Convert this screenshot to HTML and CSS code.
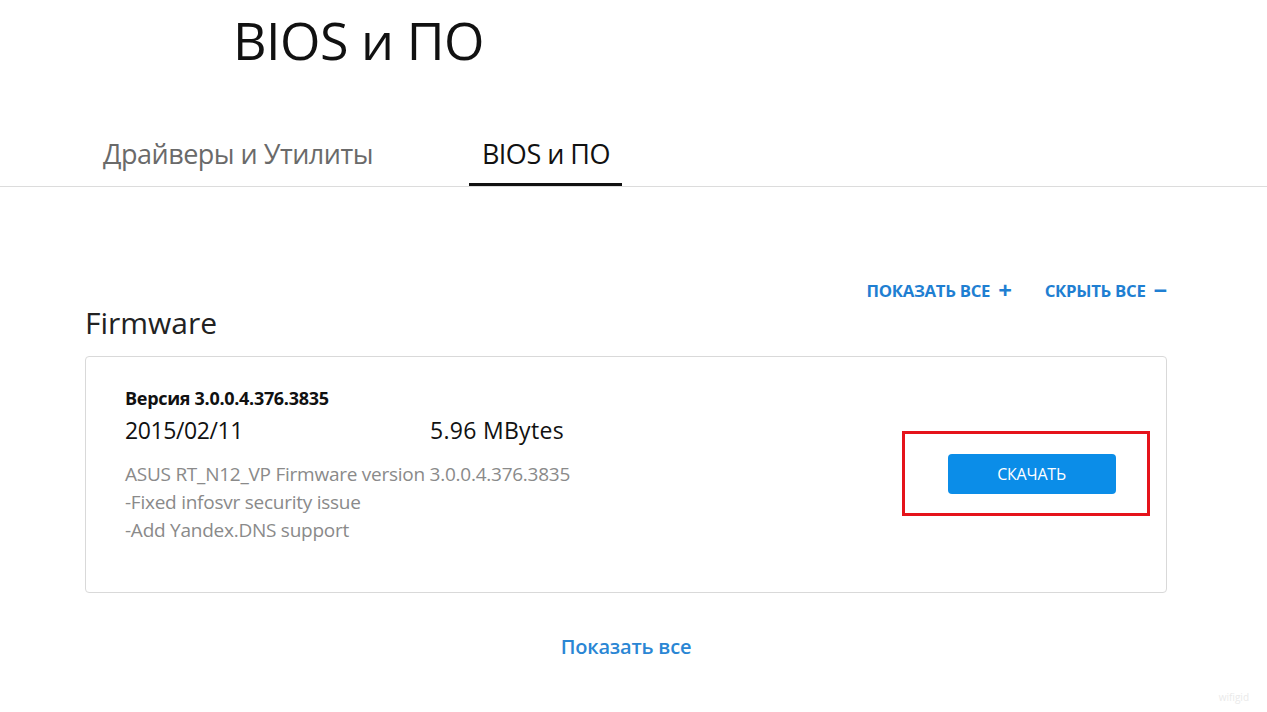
FILE: index.html
```html
<!DOCTYPE html>
<html lang="ru">
<head>
<meta charset="utf-8">
<link rel="stylesheet" href="styles.css">
</head>
<body>
<div class="page">
  <h1 class="title">BIOS и ПО</h1>
  <nav class="tabs">
    <div class="tab">Драйверы и Утилиты</div>
    <div class="tab active">BIOS и ПО</div>
  </nav>
  <section class="section">
    <div class="toggles">
      <a class="toggle">ПОКАЗАТЬ ВСЕ <span class="sign">+</span></a>
      <a class="toggle">СКРЫТЬ ВСЕ <span class="sign">−</span></a>
    </div>
    <h2 class="section-title">Firmware</h2>
    <div class="card">
      <div class="info">
        <div class="version">Версия 3.0.0.4.376.3835</div>
        <div class="meta">
          <span class="date">2015/02/11</span>
          <span class="size">5.96 MBytes</span>
        </div>
        <div class="desc">
          <div>ASUS RT_N12_VP Firmware version 3.0.0.4.376.3835</div>
          <div>-Fixed infosvr security issue</div>
          <div>-Add Yandex.DNS support</div>
        </div>
      </div>
      <div class="action">
        <div class="highlight">
          <button class="download">СКАЧАТЬ</button>
        </div>
      </div>
    </div>
    <div class="more"><a>Показать все</a></div>
  </section>
</div>
<div class="watermark">wifigid</div>
</body>
</html>
```
FILE: styles.css
```css
* { box-sizing: border-box; }
html, body { margin: 0; padding: 0; background: #fff; }
body {
  font-family: "Open Sans", "Noto Sans", sans-serif;
  color: #111;
  width: 1267px;
  height: 712px;
  overflow: hidden;
  position: relative;
}
.title {
  margin: 0;
  padding: 8px 0 0 233px;
  font-weight: 400;
  font-size: 52px;
  line-height: 64px;
  letter-spacing: -0.5px;
  color: #111;
}
.tabs {
  display: flex;
  margin-top: 62px;
  border-bottom: 1px solid #dcdcdc;
  padding-left: 103px;
  gap: 109px;
}
.tab {
  font-size: 27px;
  line-height: 40px;
  color: #6a6a6a;
  padding-bottom: 12px;
  letter-spacing: -0.5px;
}
.tab.active {
  color: #111;
  border-bottom: 3px solid #111;
  padding: 0 12px 9px 13px;
  margin-left: -13px;
}
.section {
  padding: 0 100px 0 85px;
}
.toggles {
  display: flex;
  justify-content: flex-end;
  gap: 33px;
  margin-top: 89px;
  height: 26px;
  align-items: center;
}
.toggle {
  color: #1f7fd2;
  font-weight: 700;
  font-size: 16.8px;
  letter-spacing: -0.3px;
}
.sign {
  font-size: 24px;
  font-weight: 700;
  margin-left: 4px;
  vertical-align: -2px;
}
.section-title {
  margin: 1px 0 0 0;
  font-weight: 400;
  font-size: 30px;
  line-height: 40px;
  color: #222;
}
.card {
  margin-top: 13px;
  border: 1px solid #d9d9d9;
  border-radius: 4px;
  height: 237px;
  display: flex;
  justify-content: space-between;
  padding: 28px 16px 0 39px;
}
.version {
  font-weight: 700;
  font-size: 18px;
  line-height: 26px;
  letter-spacing: -0.3px;
}
.meta {
  display: flex;
  font-size: 23px;
  line-height: 32px;
  color: #111;
  letter-spacing: 0.3px;
  margin-top: 3px;
}
.meta .date { letter-spacing: -0.4px; }
.date { width: 305px; }
.desc {
  margin-top: 14px;
  color: #8a8a8a;
  font-size: 19px;
  line-height: 28px;
  letter-spacing: -0.25px;
}
.action {
  padding-top: 46px;
}
.highlight {
  border: 3px solid #e5131b;
  width: 248px;
  height: 85px;
  display: flex;
  align-items: center;
  justify-content: center;
  padding-left: 11px;
}
.download {
  width: 168px;
  height: 40px;
  border: none;
  border-radius: 4px;
  background: #0b8de8;
  color: #fff;
  font-family: inherit;
  font-size: 16px;
  letter-spacing: -0.2px;
  padding: 0;
}
.more {
  text-align: center;
  margin-top: 40px;
}
.more a {
  color: #2a86d4;
  font-size: 20px;
  font-weight: 600;
  letter-spacing: -0.2px;
}
.watermark {
  position: absolute;
  right: 18px;
  bottom: 8px;
  font-size: 10px;
  color: #eaeaea;
}
```
